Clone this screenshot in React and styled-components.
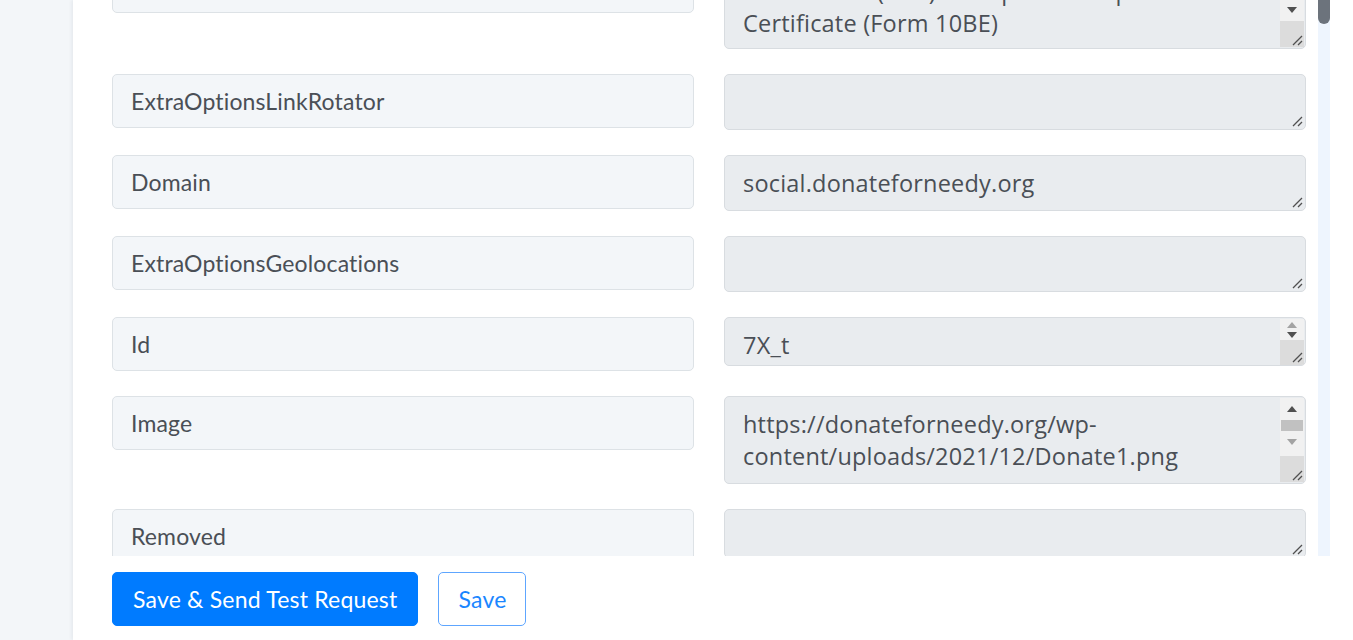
import React from "react";
import styled, { createGlobalStyle } from "styled-components";

const GlobalStyle = createGlobalStyle`
  html, body { margin: 0; padding: 0; }
  body {
    background: #f3f6f9;
    font-family: "Lato", "Liberation Sans", sans-serif;
    overflow: hidden;
  }
`;

const Page = styled.div`
  display: flex;
  height: 640px;
  width: 1353px;
`;

const Gutter = styled.div`
  width: 73px;
  flex: none;
  background: #f3f6f9;
`;

const Panel = styled.main`
  flex: 1;
  display: flex;
  flex-direction: column;
  background: #ffffff;
  box-shadow: -1px 0 4px rgba(30, 40, 60, 0.08);
`;

const Body = styled.div`
  display: flex;
  height: 556px;
  flex: none;
`;

const Viewport = styled.div`
  width: 1245px;
  flex: none;
  overflow: hidden;
  box-sizing: border-box;
  padding: 0 12px 0 39px;
`;

const Form = styled.div`
  margin-top: -41px;
`;

const Row = styled.div`
  display: grid;
  grid-template-columns: 582px 582px;
  column-gap: 30px;
  align-items: start;
  margin-bottom: 25px;
`;

const KeyInput = styled.div`
  box-sizing: border-box;
  height: 54px;
  display: flex;
  align-items: center;
  padding: 0 18px;
  background: #f3f6f9;
  border: 1px solid #dde2e6;
  border-radius: 5px;
  font-size: 23px;
  letter-spacing: 0.15px;
  color: #4a4f56;
`;

const ValueBox = styled.div`
  position: relative;
  box-sizing: border-box;
  height: ${(p) => p.$h}px;
  padding: ${(p) => p.$top}px ${(p) => (p.$scroll ? 46 : 18)}px 0 18px;
  background: #e9ecef;
  border: 1px solid #d8dce0;
  border-radius: 5px;
  font-family: "Open Sans", "Liberation Sans", sans-serif;
  font-size: 23.5px;
  letter-spacing: 0.2px;
  line-height: 32px;
  color: #4a4f56;
  overflow: hidden;
`;

const Line = styled.div`
  white-space: nowrap;
`;

const Rail = styled.div`
  position: absolute;
  top: 1px;
  right: 1px;
  bottom: 1px;
  width: 24px;
  display: flex;
  flex-direction: column;
  background: #f1f1f1;
`;

const Arrow = styled.div`
  height: ${(p) => p.$h || 24}px;
  display: flex;
  align-items: center;
  justify-content: center;
  flex: none;
`;

const Thumb = styled.div`
  height: 11px;
  margin: 0 1px;
  background: #c1c1c1;
  flex: none;
`;

const RailFill = styled.div`
  flex: 1;
`;

const Corner = styled.div`
  height: 26px;
  flex: none;
  background: #dcdcdc;
`;

const Grip = styled.svg`
  position: absolute;
  right: 2px;
  bottom: 2px;
  width: 12px;
  height: 12px;
`;

const PageTrack = styled.div`
  width: 12px;
  flex: none;
  background: #eef5fe;
`;

const PageThumb = styled.div`
  height: 24px;
  background: #6c737c;
  border-radius: 0 0 6px 6px;
`;

const Footer = styled.div`
  display: flex;
  gap: 20px;
  padding: 16px 0 0 39px;
`;

const Button = styled.button`
  box-sizing: border-box;
  height: 54px;
  padding: 0 ${(p) => (p.$primary ? 20 : 19)}px;
  border-radius: 5px;
  font-family: "Lato", "Liberation Sans", sans-serif;
  font-size: 23px;
  letter-spacing: 0.2px;
  cursor: pointer;
  background: ${(p) => (p.$primary ? "#007bff" : "#ffffff")};
  color: ${(p) => (p.$primary ? "#ffffff" : "#1a86ff")};
  border: 1px solid ${(p) => (p.$primary ? "#007bff" : "#5ea6ff")};
`;

const Tri = ({ up, color }) => (
  <svg width="10" height="6" viewBox="0 0 10 6">
    <path d={up ? "M0 6 L5 0 L10 6 Z" : "M0 0 L10 0 L5 6 Z"} fill={color} />
  </svg>
);

const GripIcon = () => (
  <Grip viewBox="0 0 12 12">
    <path d="M11 2 L2 11 M11 7 L7 11" stroke="#505050" strokeWidth="1.3" fill="none" />
  </Grip>
);

const ScrollRail = ({ mode }) => {
  if (mode === "compact") {
    return (
      <Rail>
        <Arrow $h={11}><Tri up color="#a3a3a3" /></Arrow>
        <Arrow $h={10}><Tri color="#505050" /></Arrow>
        <RailFill />
        <Corner />
      </Rail>
    );
  }
  if (mode === "bottom") {
    return (
      <Rail>
        <Arrow $h={22}><Tri up color="#505050" /></Arrow>
        <Thumb />
        <Arrow $h={22}><Tri color="#a3a3a3" /></Arrow>
        <RailFill />
        <Corner />
      </Rail>
    );
  }
  return (
    <Rail>
      <Arrow $h={22}><Tri up color="#a3a3a3" /></Arrow>
      <RailFill />
      <Arrow $h={22}><Tri color="#505050" /></Arrow>
      <Corner />
    </Rail>
  );
};

const rows = [
  { key: "Description", lines: ["Income Tax (80G) Receipt & Exemption", "Certificate (Form 10BE)"], h: 90, top: 15, scroll: "down" },
  { key: "ExtraOptionsLinkRotator", lines: [], h: 56 },
  { key: "Domain", lines: ["social.donateforneedy.org"], h: 56 },
  { key: "ExtraOptionsGeolocations", lines: [], h: 56 },
  { key: "Id", lines: ["7X_t"], h: 49, scroll: "compact" },
  { key: "Image", lines: ["https://donateforneedy.org/wp-", "content/uploads/2021/12/Donate1.png"], h: 88, scroll: "bottom" },
  { key: "Removed", lines: [], h: 49 },
];

export default function App() {
  return (
    <>
      <GlobalStyle />
      <Page>
        <Gutter />
        <Panel>
          <Body>
            <Viewport>
              <Form>
                {rows.map((r) => (
                  <Row key={r.key}>
                    <KeyInput>{r.key}</KeyInput>
                    <ValueBox $h={r.h} $top={r.top || 11} $scroll={!!r.scroll}>
                      {r.lines.map((l) => (
                        <Line key={l}>{l}</Line>
                      ))}
                      {r.scroll && <ScrollRail mode={r.scroll} />}
                      <GripIcon />
                    </ValueBox>
                  </Row>
                ))}
              </Form>
            </Viewport>
            <PageTrack>
              <PageThumb />
            </PageTrack>
          </Body>
          <Footer>
            <Button $primary>Save &amp; Send Test Request</Button>
            <Button>Save</Button>
          </Footer>
        </Panel>
      </Page>
    </>
  );
}
